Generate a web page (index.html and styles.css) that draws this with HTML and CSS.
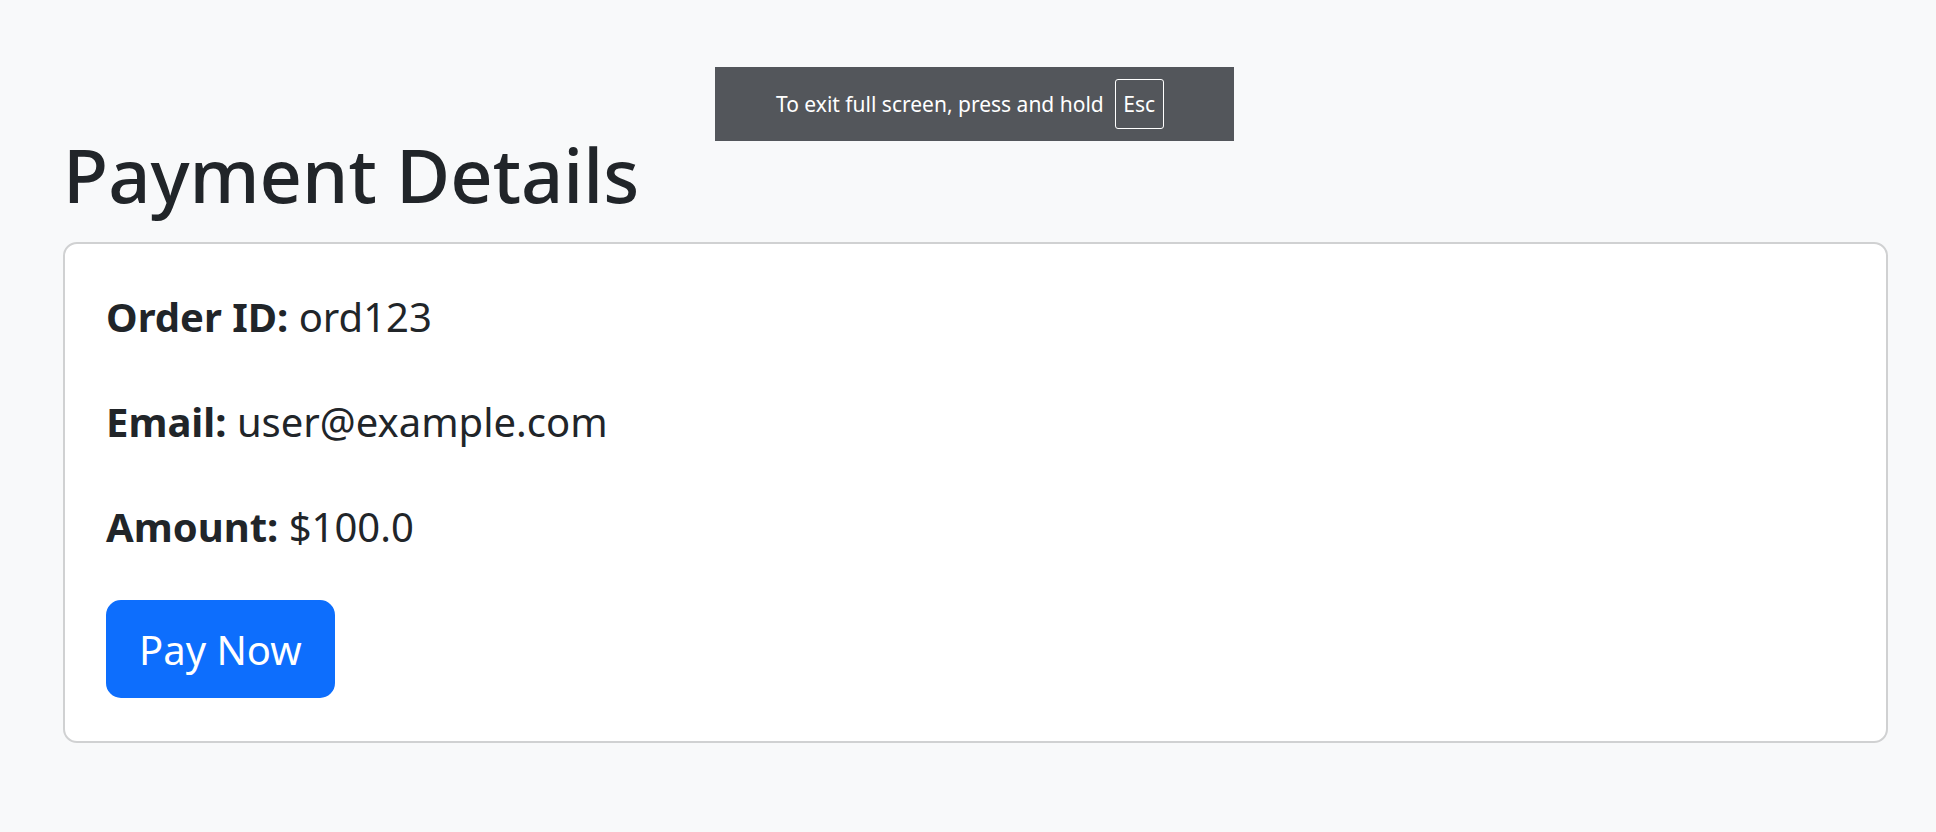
FILE: index.html
```html
<!DOCTYPE html>
<html lang="en">
<head>
<meta charset="utf-8">
<title>Payment Details</title>
<link rel="stylesheet" href="styles.css">
</head>
<body>
<main class="page">
  <h1 class="title">Payment Details</h1>
  <section class="card">
    <p class="row"><strong>Order ID:</strong> ord123</p>
    <p class="row"><strong>Email:</strong> user@example.com</p>
    <p class="row"><strong>Amount:</strong> $100.0</p>
    <button class="btn" type="button">Pay Now</button>
  </section>
</main>
<div class="fs-toast">
  <span class="fs-text">To exit full screen, press and hold</span>
  <span class="fs-key">Esc</span>
</div>
</body>
</html>
```

FILE: styles.css
```css
html, body {
  margin: 0;
  padding: 0;
}
body {
  background: #f8f9fa;
  color: #212529;
  font-family: "Segoe UI", "Noto Sans", "Open Sans", sans-serif;
  width: 1936px;
  height: 832px;
  overflow: hidden;
  position: relative;
}
.page {
  padding: 131px 48px 0 63px;
}
.title {
  margin: 0 0 22px;
  font-size: 74px;
  line-height: 1.2;
  font-weight: 500;
}
.card {
  background: #fff;
  border: 2px solid #d0d1d2;
  border-radius: 14px;
  padding: 41px 41px 43px;
}
.card .btn {
  display: block;
}
.row {
  margin: 0 0 42px;
  font-size: 40px;
  line-height: 63px;
}
.row strong {
  font-weight: 700;
}
.btn {
  font-family: inherit;
  font-size: 40px;
  line-height: 63px;
  color: #fff;
  background: #0d6efd;
  border: 2px solid #0d6efd;
  border-radius: 15px;
  padding: 16px 31px 15px;
  margin: 0;
}
.fs-toast {
  position: absolute;
  left: 715px;
  top: 67px;
  width: 519px;
  height: 74px;
  box-sizing: border-box;
  background: #53565b;
  color: #fff;
  display: flex;
  align-items: center;
  padding-left: 61px;
  gap: 11px;
  font-size: 21px;
}
.fs-key {
  border: 1px solid #fff;
  border-radius: 3px;
  width: 49px;
  height: 50px;
  box-sizing: border-box;
  display: flex;
  align-items: center;
  justify-content: center;
}
```
